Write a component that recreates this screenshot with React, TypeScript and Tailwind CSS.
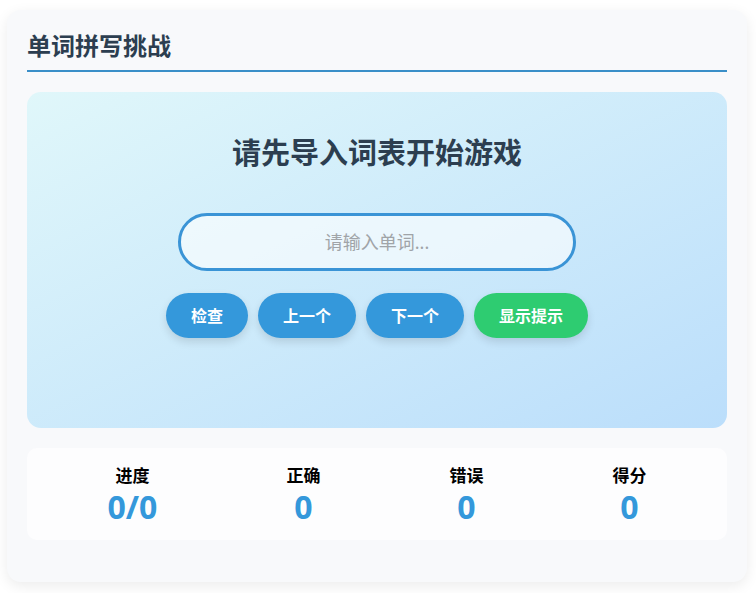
const font = { fontFamily: '"Noto Sans", "Noto Sans CJK SC", sans-serif' };

function Stat({ label, value }: { label: string; value: string }) {
  return (
    <div className="flex flex-col items-center">
      <div className="text-[17px] leading-[26px] font-bold text-black">{label}</div>
      <div className="text-[32px] leading-[36px] font-bold text-[#3498db]">{value}</div>
    </div>
  );
}

export default function App() {
  const buttons = [
    { text: "检查", cls: "bg-[#3498db]" },
    { text: "上一个", cls: "bg-[#3498db]" },
    { text: "下一个", cls: "bg-[#3498db]" },
    { text: "显示提示", cls: "bg-[#2ecc71]" },
  ];

  return (
    <div className="min-h-screen bg-white pt-[10px] pl-[7px]" style={font}>
      <div className="w-[740px] rounded-[14px] bg-[#f8f9fb] px-5 pt-5 pb-[42px] shadow-[0_4px_14px_rgba(0,0,0,0.08)]">
        {/* タイトル */}
        <h1 className="mb-5 border-b-2 border-[#3a8fc8] pb-2 text-[24px] leading-[32px] font-bold text-[#2c3e50]">
          单词拼写挑战
        </h1>

        {/* ゲームエリア */}
        <div className="flex h-[336px] flex-col items-center rounded-[14px] bg-gradient-to-br from-[#e0f7fa] to-[#bbdefb] pt-10">
          <h2 className="text-[29px] leading-[42px] font-bold text-[#2c3e50]">请先导入词表开始游戏</h2>
          <input
            type="text"
            placeholder="请输入单词..."
            className="mt-[39px] h-[58px] w-[398px] rounded-full border-[3px] border-[#3a94d6] bg-white/60 text-center text-[18px] text-[#333] outline-none placeholder:text-[#a0a4a8]"
            style={font}
          />
          <div className="mt-[22px] flex gap-[10px]">
            {buttons.map((b) => (
              <button
                key={b.text}
                className={`${b.cls} h-[45px] rounded-full px-[25px] text-[16px] font-bold text-white shadow-[0_4px_8px_rgba(0,0,0,0.12)]`}
                style={font}
              >
                {b.text}
              </button>
            ))}
          </div>
        </div>

        {/* 統計 */}
        <div className="mt-5 flex justify-around rounded-[10px] bg-[#fdfdfe] px-4 py-[15px]">
          <Stat label="进度" value="0/0" />
          <Stat label="正确" value="0" />
          <Stat label="错误" value="0" />
          <Stat label="得分" value="0" />
        </div>
      </div>
    </div>
  );
}
